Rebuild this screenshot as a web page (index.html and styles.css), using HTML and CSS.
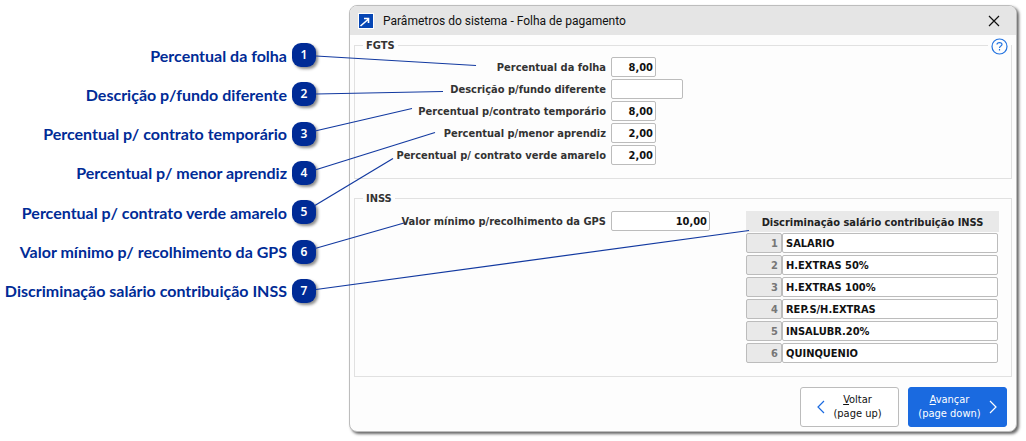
FILE: index.html
```html
<!DOCTYPE html>
<html lang="pt-BR">

<head>
    <meta charset="UTF-8">
    <meta name="viewport" content="width=device-width, initial-scale=1.0">
    <title>Parâmetros do sistema - Folha de pagamento</title>
    <link rel="stylesheet" href="styles.css">
</head>

<body>
    <div class="page">
        <ol class="callouts">
            <li>Percentual da folha <span class="badge">1</span></li>
            <li>Descrição p/fundo diferente <span class="badge">2</span></li>
            <li>Percentual p/ contrato temporário <span class="badge">3</span></li>
            <li>Percentual p/ menor aprendiz <span class="badge">4</span></li>
            <li>Percentual p/ contrato verde amarelo <span class="badge">5</span></li>
            <li>Valor mínimo p/ recolhimento da GPS <span class="badge">6</span></li>
            <li>Discriminação salário contribuição INSS <span class="badge">7</span></li>
        </ol>

        <main class="dialog">
            <header class="titlebar">
                <svg class="app-icon" width="16" height="16" viewBox="0 0 16 16">
                    <rect width="16" height="16" fill="#fff" />
                    <rect x="1" y="1" width="14" height="14" fill="#0646b4" />
                    <path d="M2.500 13 L10 6.500 M6 5.500 H10.500 V10" fill="none" stroke="#fff" stroke-width="1.6" />
                </svg>
                <h1>Parâmetros do sistema - Folha de pagamento</h1>
                <button class="close" aria-label="Fechar">
                    <svg width="12" height="12" viewBox="0 0 12 12">
                        <path d="M1 1 L11 11 M11 1 L1 11" stroke="#111" stroke-width="1.2" />
                    </svg>
                </button>
            </header>

            <button class="help" aria-label="Ajuda">
                <svg width="17" height="17" viewBox="0 0 17 17" fill="none" stroke="#2273e0">
                    <circle cx="8.5" cy="8.5" r="7.5" fill="#fdfdfd" stroke-width="1.2" />
                    <path d="M6 6.6 C6 4 11 4 11 6.6 C11 8.2 8.5 8 8.5 10" stroke-width="1.2" />
                    <path d="M8.5 11 V12.5" stroke-width="1.2" />
                </svg>
            </button>

            <fieldset class="group fgts">
                <legend>FGTS</legend>
                <div class="fields">
                    <label for="folha">Percentual da folha</label>
                    <input type="text" id="folha" class="num" value="8,00">
                    <label for="fundo">Descrição p/fundo diferente</label>
                    <input type="text" id="fundo" class="desc">
                    <label for="temporario">Percentual p/contrato temporário</label>
                    <input type="text" id="temporario" class="num" value="8,00">
                    <label for="aprendiz">Percentual p/menor aprendiz</label>
                    <input type="text" id="aprendiz" class="num" value="2,00">
                    <label for="verde">Percentual p/ contrato verde amarelo</label>
                    <input type="text" id="verde" class="num" value="2,00">
                </div>
            </fieldset>

            <fieldset class="group inss">
                <legend>INSS</legend>
                <div class="fields">
                    <label for="gps">Valor mínimo p/recolhimento da GPS</label>
                    <input type="text" id="gps" class="num wide" value="10,00">
                </div>
                <table>
                    <thead>
                        <tr><th colspan="2" id="disc">Discriminação salário contribuição INSS</th></tr>
                    </thead>
                    <tbody>
                        <tr><td class="row-no"><span>1</span></td><td><input type="text" aria-labelledby="disc" value="SALARIO"></td></tr>
                        <tr><td class="row-no"><span>2</span></td><td><input type="text" aria-labelledby="disc" value="H.EXTRAS 50%"></td></tr>
                        <tr><td class="row-no"><span>3</span></td><td><input type="text" aria-labelledby="disc" value="H.EXTRAS 100%"></td></tr>
                        <tr><td class="row-no"><span>4</span></td><td><input type="text" aria-labelledby="disc" value="REP.S/H.EXTRAS"></td></tr>
                        <tr><td class="row-no"><span>5</span></td><td><input type="text" aria-labelledby="disc" value="INSALUBR.20%"></td></tr>
                        <tr><td class="row-no"><span>6</span></td><td><input type="text" aria-labelledby="disc" value="QUINQUENIO"></td></tr>
                    </tbody>
                </table>
            </fieldset>

            <footer class="actions">
                <button class="nav">
                    <svg width="8" height="14" viewBox="0 0 8 14">
                        <path d="M7 1 L1 7 L7 13" fill="none" stroke="#1a6ae0" stroke-width="1.2" />
                    </svg>
                    <span><u>V</u>oltar<br>(page up)</span>
                </button>
                <button class="nav primary">
                    <span><u>A</u>vançar<br>(page down)</span>
                    <svg width="8" height="14" viewBox="0 0 8 14">
                        <path d="M1 1 L7 7 L1 13" fill="none" stroke="#fff" stroke-width="1.2" />
                    </svg>
                </button>
            </footer>
        </main>

        <!-- lines from the badges to the fields -->
        <svg class="lines" width="760" height="320" viewBox="0 0 760 320">
            <path d="M316 56 L476 65.500" />
            <path d="M316 94 L443 91.500" />
            <path d="M315 131 L412 108.500" />
            <path d="M315 170 L435 132.500" />
            <path d="M314 206 L393 158.500" />
            <path d="M315 248.500 L404 223" />
            <path d="M316 289.500 L749 230.500" />
        </svg>
    </div>
</body>

</html>
```
FILE: styles.css
```css
* {
    box-sizing: border-box;
}

body {
    margin: 0;
    background: #fff;
    font-family: "DejaVu Sans Condensed", "Noto Sans", sans-serif;
    font-size: 11px;
}

button,
input {
    font: inherit;
    margin: 0;
}

.page {
    position: relative;
    display: flex;
    align-items: flex-start;
    padding: 5px 9px 9px 0;
}

.callouts {
    flex: none;
    width: 316px;
    min-height: 298px;
    margin: 0 33px 0 0;
    padding: 38px 0 0;
    list-style: none;
    display: flex;
    flex-direction: column;
    justify-content: space-between;
    font-family: Lato, "Open Sans", sans-serif;
    font-size: 16px;
    font-weight: 700;
    color: #002b96;
}

.callouts li {
    display: flex;
    align-items: center;
    justify-content: flex-end;
    gap: 5px;
    height: 24px;
    white-space: nowrap;
}

.badge {
    flex: none;
    width: 24px;
    height: 24px;
    border-radius: 9px;
    background: #002b96;
    color: #fff;
    font-family: "Noto Sans", sans-serif;
    font-size: 12px;
    font-weight: 600;
    line-height: 24px;
    text-align: center;
    box-shadow: 2px 2px 3px rgba(0, 0, 0, 0.45);
}

.lines {
    position: absolute;
    left: 0;
    top: 0;
    pointer-events: none;
    fill: none;
    stroke: #1239a0;
    stroke-width: 1.2;
}

.dialog {
    position: relative;
    flex: 1;
    background: #fdfdfd;
    border: 1px solid #bdbdbd;
    border-radius: 8px;
    box-shadow: 2px 2px 3px rgba(0, 0, 0, 0.6);
}

.titlebar {
    display: flex;
    align-items: center;
    height: 29px;
    padding: 0 8px;
    background: #e5e5e5;
    border-radius: 7px 7px 0 0;
}

.titlebar h1 {
    flex: 1;
    margin: 0 0 0 9px;
    font-family: Roboto, sans-serif;
    font-size: 12px;
    font-weight: 400;
    color: #111;
}

.close {
    display: flex;
    padding: 8px;
    border: 0;
    background: none;
}

.help {
    position: absolute;
    top: 32px;
    right: 5px;
    display: flex;
    padding: 0 3px;
    border: 0;
    background: #fdfdfd;
}

.group {
    min-width: 0;
    margin: 0 4px;
    padding: 0;
    border: 1px solid #e1e1e1;
}

.group legend {
    margin-left: 8px;
    padding: 2px 3px 0;
    font-weight: 700;
    line-height: 14px;
    color: #333;
}

.fgts {
    margin-top: 2px;
    padding: 4px 0 13px;
}

.inss {
    margin-top: 11px;
    padding: 5px 12px 12px 0;
    display: flex;
    align-items: flex-start;
    justify-content: space-between;
}

.fields {
    display: grid;
    grid-template-columns: 251px auto;
    column-gap: 5px;
    row-gap: 2px;
    align-items: center;
    justify-content: start;
}

.fields label {
    font-weight: 700;
    text-align: right;
    white-space: nowrap;
    color: #333;
}

input {
    width: 45px;
    height: 20px;
    padding: 0 3px;
    border: 1px solid #bcbcbc;
    border-radius: 2px;
    background: #fff;
    color: #111;
    font-weight: 700;
}

.num {
    text-align: right;
    padding: 0 2px;
}

.desc {
    width: 72px;
}

.wide {
    width: 99px;
}

table {
    width: 253px;
    border-collapse: separate;
    border-spacing: 0;
    font-weight: 700;
}

th {
    height: 21px;
    padding: 2px 0 0;
    background: #e9e9e9;
    color: #222;
}

td {
    padding: 1px 1px 1px 0;
}

td input {
    display: block;
    width: 100%;
}

.row-no {
    width: 36px;
    padding-right: 0;
}

.row-no span {
    display: block;
    height: 20px;
    padding-right: 3px;
    border: 1px solid #bcbcbc;
    border-radius: 2px;
    background: #e9e9e9;
    color: #777;
    line-height: 20px;
    text-align: right;
}

.actions {
    display: flex;
    justify-content: flex-end;
    gap: 9px;
    padding: 10px 9px 4px;
}

.nav {
    display: flex;
    align-items: center;
    justify-content: center;
    gap: 8px;
    width: 99px;
    height: 40px;
    padding: 0;
    border: 1px solid #bcbcbc;
    border-radius: 3px;
    background: #fff;
    color: #111;
    line-height: 14px;
    white-space: nowrap;
}

.primary {
    border-color: #1a6ae0;
    background: #1a6ae0;
    color: #fff;
}
```
